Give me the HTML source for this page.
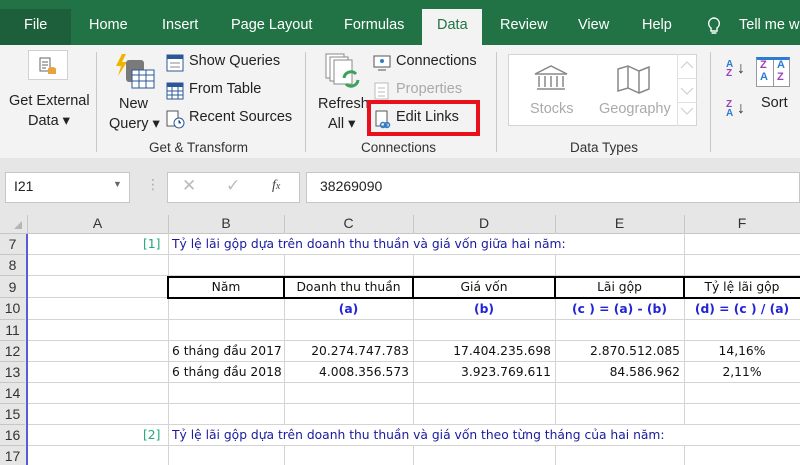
<!DOCTYPE html>
<html><head><meta charset="utf-8"><style>
*{margin:0;padding:0;box-sizing:border-box}
body{width:800px;height:465px;overflow:hidden;background:#fff;font-family:"Segoe UI","Liberation Sans","DejaVu Sans",sans-serif;position:relative}
.a{position:absolute;white-space:nowrap}
.tab{position:absolute;top:17px;color:#fff;font-size:14.5px}
.rb{font-size:14.5px;color:#222}
.grp{position:absolute;top:140px;font-size:13.5px;color:#333}
.sep{position:absolute;top:52px;width:1px;height:100px;background:#c8c8c8}
.cell{position:absolute;font-family:"DejaVu Sans","Liberation Sans",sans-serif;font-size:12.3px;color:#111;white-space:nowrap}
.rn{position:absolute;left:0;width:25px;text-align:center;font-size:14px;color:#333;font-family:"Liberation Sans",sans-serif}
.hl{position:absolute;left:28px;width:772px;height:1px;background:#d4d4d4}
.hr{position:absolute;left:0;width:25px;height:1px;background:#c6c6c6}
.vl{position:absolute;top:233px;width:1px;height:232px;background:#d4d4d4}
</style></head><body>
<div class="a" style="left:0;top:0;width:800px;height:45px;background:#217346"></div>
<div class="a" style="left:0;top:9px;width:71px;height:36px;background:#1d5f3a"></div>
<div class="tab" style="left:24px">File</div>
<div class="tab" style="left:89px">Home</div>
<div class="tab" style="left:162px">Insert</div>
<div class="tab" style="left:231px">Page Layout</div>
<div class="tab" style="left:344px">Formulas</div>
<div class="a" style="left:422px;top:9px;width:60px;height:37px;background:#f3f3f3"></div>
<div class="tab" style="left:437px;color:#217346">Data</div>
<div class="tab" style="left:500px">Review</div>
<div class="tab" style="left:578px">View</div>
<div class="tab" style="left:642px">Help</div>
<svg class="a" style="left:706px;top:16px" width="16" height="20"><path d="M8 2a5.5 5.5 0 0 0-3 10v3h6v-3a5.5 5.5 0 0 0-3-10zM5.5 17h5" stroke="#fff" stroke-width="1.4" fill="none"/></svg>
<div class="tab" style="left:739px">Tell me w</div>
<div class="a" style="left:0;top:45px;width:800px;height:113px;background:#f3f3f3"></div>
<div class="a" style="left:28px;top:50px;width:40px;height:30px;background:#fff;border:1px solid #d0d0d0"></div>
<svg class="a" style="left:38px;top:57px" width="20" height="20"><rect x="2" y="1" width="10" height="13" fill="#fff" stroke="#666"/><path d="M4 5h6M4 8h6M4 11h4" stroke="#666"/><ellipse cx="14" cy="12" rx="4" ry="2" fill="#e8a33d"/><rect x="10" y="12" width="8" height="5" fill="#e8a33d"/></svg>
<div class="a rb" style="left:9px;top:93px">Get External</div>
<div class="a rb" style="left:28px;top:113px">Data ▾</div>
<div class="sep" style="left:96px"></div>
<svg class="a" style="left:112px;top:52px" width="44" height="40"><path d="M10 2l-6 12h5l-3 10 9-14h-5l4-8z" fill="#f0b400"/><rect x="14" y="8" width="18" height="22" rx="3" fill="#7a7a7a"/><rect x="20" y="18" width="22" height="18" fill="#fff" stroke="#2b5797"/><path d="M20 23h22M20 29h22M27 18v18M34 18v18" stroke="#2b5797"/></svg>
<div class="a rb" style="left:119px;top:96px">New</div>
<div class="a rb" style="left:109px;top:116px">Query ▾</div>
<svg class="a" style="left:166px;top:54px" width="18" height="18"><rect x="1" y="1" width="16" height="16" fill="#fff" stroke="#2b5797"/><rect x="1" y="1" width="16" height="4" fill="#2b5797"/><path d="M4 9h10M4 13h10" stroke="#888"/></svg>
<div class="a rb" style="left:189px;top:53px">Show Queries</div>
<svg class="a" style="left:166px;top:82px" width="18" height="18"><rect x="1" y="1" width="16" height="16" fill="#fff" stroke="#2b5797"/><rect x="1" y="1" width="16" height="4" fill="#2b5797"/><path d="M1 9h16M1 13h16M6 5v12M12 5v12" stroke="#2b5797"/></svg>
<div class="a rb" style="left:189px;top:81px">From Table</div>
<svg class="a" style="left:166px;top:110px" width="20" height="20"><rect x="1" y="1" width="11" height="15" fill="#fff" stroke="#555"/><circle cx="13" cy="13" r="5" fill="#fff" stroke="#2b5797"/><path d="M13 10v3h2" stroke="#2b5797"/></svg>
<div class="a rb" style="left:189px;top:109px">Recent Sources</div>
<div class="grp" style="left:149px">Get &amp; Transform</div>
<div class="sep" style="left:305px"></div>
<svg class="a" style="left:324px;top:52px" width="40" height="40"><rect x="2" y="2" width="18" height="24" fill="#fff" stroke="#888"/><rect x="6" y="5" width="18" height="24" fill="#fff" stroke="#888"/><rect x="10" y="8" width="18" height="24" fill="#fff" stroke="#888"/><path d="M20 26a7 7 0 0 1 12-4M34 28a7 7 0 0 1-12 4" stroke="#3aa35a" stroke-width="3" fill="none"/></svg>
<div class="a rb" style="left:318px;top:96px">Refresh</div>
<div class="a rb" style="left:328px;top:116px">All ▾</div>
<svg class="a" style="left:373px;top:54px" width="18" height="18"><rect x="1" y="2" width="16" height="11" fill="#fff" stroke="#555"/><circle cx="9" cy="7" r="2" fill="#2b7cd3"/><path d="M5 16h8" stroke="#555"/></svg>
<div class="a rb" style="left:396px;top:53px">Connections</div>
<svg class="a" style="left:373px;top:82px" width="18" height="18"><rect x="2" y="1" width="13" height="16" fill="#fff" stroke="#bbb"/><path d="M5 6h7M5 10h7M5 14h7" stroke="#bbb"/></svg>
<div class="a rb" style="left:396px;top:81px;color:#aaa">Properties</div>
<svg class="a" style="left:375px;top:110px" width="18" height="20"><rect x="1" y="1" width="11" height="15" fill="#fff" stroke="#555"/><circle cx="8" cy="15" r="2.5" fill="none" stroke="#2b7cd3" stroke-width="1.5"/><circle cx="12" cy="15" r="2.5" fill="none" stroke="#2b7cd3" stroke-width="1.5"/></svg>
<div class="a rb" style="left:396px;top:109px">Edit Links</div>
<div class="a" style="left:367px;top:100px;width:113px;height:36px;border:4px solid #e8101a"></div>
<div class="grp" style="left:361px">Connections</div>
<div class="sep" style="left:496px"></div>
<div class="a" style="left:508px;top:54px;width:189px;height:72px;background:#fff;border:1px solid #d4d4d4"></div>
<div class="a" style="left:677px;top:54px;width:1px;height:72px;background:#e0e0e0"></div>
<div class="a" style="left:677px;top:78px;width:20px;height:1px;background:#e0e0e0"></div>
<div class="a" style="left:677px;top:102px;width:20px;height:1px;background:#e0e0e0"></div>
<svg class="a" style="left:679px;top:58px" width="16" height="64"><path d="M2 10l6-6 6 6M2 30l6 6 6-6M2 50l6 6 6-6" stroke="#ccc" fill="none"/></svg>
<svg class="a" style="left:533px;top:64px" width="36" height="28"><path d="M2 10L18 2 34 10ZM4 25h28M6 12v11M12 12v11M18 12v11M24 12v11M30 12v11" stroke="#888" stroke-width="1.5" fill="none"/></svg>
<div class="a rb" style="left:530px;top:101px;color:#aaa">Stocks</div>
<svg class="a" style="left:616px;top:64px" width="36" height="30"><path d="M2 5l10-3 11 5 10-4v22l-10 4-11-5-10 3z M12 2v22M23 7v22" stroke="#888" stroke-width="1.5" fill="none"/></svg>
<div class="a rb" style="left:599px;top:101px;color:#aaa">Geography</div>
<div class="grp" style="left:570px">Data Types</div>
<div class="sep" style="left:710px"></div>
<div class="a" style="left:726px;top:60px;font-size:10px;line-height:9px;font-weight:bold"><span style="color:#2b7cd3">A</span><br><span style="color:#9b3fb5">Z</span></div>
<div class="a" style="left:737px;top:60px;font-size:16px;color:#333">↓</div>
<div class="a" style="left:726px;top:100px;font-size:10px;line-height:9px;font-weight:bold"><span style="color:#9b3fb5">Z</span><br><span style="color:#2b7cd3">A</span></div>
<div class="a" style="left:737px;top:100px;font-size:16px;color:#333">↓</div>
<div class="a" style="left:756px;top:57px;width:34px;height:30px;background:#fff;border:1px solid #999;border-top:3px solid #2b7cd3"></div>
<div class="a" style="left:773px;top:60px;width:1px;height:27px;background:#999"></div>
<div class="a" style="left:760px;top:59px;font-size:11px;line-height:12px;font-weight:bold"><span style="color:#9b3fb5">Z</span><br><span style="color:#2b7cd3">A</span></div>
<div class="a" style="left:777px;top:59px;font-size:11px;line-height:12px;font-weight:bold"><span style="color:#2b7cd3">A</span><br><span style="color:#9b3fb5">Z</span></div>
<div class="a rb" style="left:761px;top:95px">Sort</div>
<div class="a" style="left:0;top:158px;width:800px;height:55px;background:#e6e6e6"></div>
<div class="a" style="left:5px;top:172px;width:125px;height:31px;background:#fff;border:1px solid #c6c6c6"></div>
<div class="a" style="left:14px;top:178px;font-size:14px;color:#222">I21</div>
<div class="a" style="left:113px;top:179px;font-size:9px;color:#666">▼</div>
<div class="a" style="left:146px;top:176px;font-size:14px;color:#aaa">⋮</div>
<div class="a" style="left:167px;top:172px;width:133px;height:31px;background:#fff;border:1px solid #c6c6c6"></div>
<div class="a" style="left:182px;top:176px;font-size:17px;color:#bbb">✕</div>
<div class="a" style="left:226px;top:176px;font-size:17px;color:#bbb">✓</div>
<div class="a" style="left:272px;top:178px;font-size:14px;color:#444;font-style:italic;font-family:'Liberation Serif',serif">f<span style="font-size:10px">x</span></div>
<div class="a" style="left:306px;top:172px;width:494px;height:31px;background:#fff;border:1px solid #c6c6c6"></div>
<div class="a" style="left:320px;top:178px;font-size:14px;color:#222">38269090</div>
<div class="a" style="left:0;top:213px;width:800px;height:21px;background:#e6e6e6;border-bottom:1px solid #c6c6c6"></div>
<svg class="a" style="left:13px;top:220px" width="10" height="10"><path d="M9 1v8H1z" fill="#b5b5b5"/></svg>
<div class="a" style="left:27px;top:215px;width:1px;height:19px;background:#c6c6c6"></div>
<div class="a" style="left:168px;top:215px;width:1px;height:19px;background:#c6c6c6"></div>
<div class="a" style="left:284px;top:215px;width:1px;height:19px;background:#c6c6c6"></div>
<div class="a" style="left:413px;top:215px;width:1px;height:19px;background:#c6c6c6"></div>
<div class="a" style="left:555px;top:215px;width:1px;height:19px;background:#c6c6c6"></div>
<div class="a" style="left:684px;top:215px;width:1px;height:19px;background:#c6c6c6"></div>
<div class="a" style="left:27px;top:215px;width:141px;text-align:center;color:#333;font-size:14px">A</div>
<div class="a" style="left:168px;top:215px;width:116px;text-align:center;color:#333;font-size:14px">B</div>
<div class="a" style="left:284px;top:215px;width:129px;text-align:center;color:#333;font-size:14px">C</div>
<div class="a" style="left:413px;top:215px;width:142px;text-align:center;color:#333;font-size:14px">D</div>
<div class="a" style="left:555px;top:215px;width:129px;text-align:center;color:#333;font-size:14px">E</div>
<div class="a" style="left:684px;top:215px;width:116px;text-align:center;color:#333;font-size:14px">F</div>
<div class="a" style="left:0;top:234px;width:26px;height:231px;background:#e6e6e6"></div>
<div class="a" style="left:26px;top:234px;width:2px;height:231px;background:#5b5bd6"></div>
<div class="hr" style="top:254px"></div><div class="hr" style="top:275px"></div><div class="hr" style="top:297px"></div><div class="hr" style="top:319px"></div><div class="hr" style="top:340px"></div><div class="hr" style="top:361px"></div><div class="hr" style="top:382px"></div><div class="hr" style="top:403px"></div><div class="hr" style="top:424px"></div><div class="hr" style="top:445px"></div>
<div class="rn" style="top:236px">7</div><div class="rn" style="top:257px">8</div><div class="rn" style="top:279px">9</div><div class="rn" style="top:300px">10</div><div class="rn" style="top:322px">11</div><div class="rn" style="top:343px">12</div><div class="rn" style="top:364px">13</div><div class="rn" style="top:385px">14</div><div class="rn" style="top:406px">15</div><div class="rn" style="top:427px">16</div><div class="rn" style="top:448px">17</div>
<div class="hl" style="top:254px"></div><div class="hl" style="top:275px"></div><div class="hl" style="top:297px"></div><div class="hl" style="top:319px"></div><div class="hl" style="top:340px"></div><div class="hl" style="top:361px"></div><div class="hl" style="top:382px"></div><div class="hl" style="top:403px"></div><div class="hl" style="top:424px"></div><div class="hl" style="top:445px"></div>
<div class="vl" style="left:168px"></div><div class="vl" style="left:284px"></div><div class="vl" style="left:413px"></div><div class="vl" style="left:555px"></div><div class="vl" style="left:684px"></div>
<div class="a" style="left:169px;top:234px;width:515px;height:20px;background:#fff"></div>
<div class="a" style="left:169px;top:425px;width:631px;height:20px;background:#fff"></div>
<div class="a" style="left:167px;top:276px;width:633px;height:23px;border:2px solid #000;border-right:none"></div>
<div class="a" style="left:283px;top:276px;width:2px;height:23px;background:#000"></div>
<div class="a" style="left:412px;top:276px;width:2px;height:23px;background:#000"></div>
<div class="a" style="left:554px;top:276px;width:2px;height:23px;background:#000"></div>
<div class="a" style="left:683px;top:276px;width:2px;height:23px;background:#000"></div>
<div class="cell" style="left:143px;top:237px;color:#1fa87a">[1]</div>
<div class="cell" style="left:172px;top:237px;color:#1a1a9e">Tỷ lệ lãi gộp dựa trên doanh thu thuần và giá vốn giữa hai năm:</div>
<div class="cell" style="left:168px;top:280px;width:116px;text-align:center">Năm</div>
<div class="cell" style="left:284px;top:280px;width:129px;text-align:center">Doanh thu thuần</div>
<div class="cell" style="left:413px;top:280px;width:142px;text-align:center">Giá vốn</div>
<div class="cell" style="left:555px;top:280px;width:129px;text-align:center">Lãi gộp</div>
<div class="cell" style="left:684px;top:280px;width:116px;text-align:center">Tỷ lệ lãi gộp</div>
<div class="cell" style="left:284px;top:302px;width:129px;text-align:center;color:#2323d8;font-weight:bold">(a)</div>
<div class="cell" style="left:413px;top:302px;width:142px;text-align:center;color:#2323d8;font-weight:bold">(b)</div>
<div class="cell" style="left:555px;top:302px;width:129px;text-align:center;color:#2323d8;font-weight:bold">(c ) = (a) - (b)</div>
<div class="cell" style="left:684px;top:302px;width:116px;text-align:center;color:#2323d8;font-weight:bold">(d) = (c ) / (a)</div>
<div class="cell" style="left:172px;top:344px">6 tháng đầu 2017</div>
<div class="cell" style="left:284px;top:344px;width:125px;text-align:right">20.274.747.783</div>
<div class="cell" style="left:413px;top:344px;width:138px;text-align:right">17.404.235.698</div>
<div class="cell" style="left:555px;top:344px;width:125px;text-align:right">2.870.512.085</div>
<div class="cell" style="left:684px;top:344px;width:116px;text-align:center">14,16%</div>
<div class="cell" style="left:172px;top:365px">6 tháng đầu 2018</div>
<div class="cell" style="left:284px;top:365px;width:125px;text-align:right">4.008.356.573</div>
<div class="cell" style="left:413px;top:365px;width:138px;text-align:right">3.923.769.611</div>
<div class="cell" style="left:555px;top:365px;width:125px;text-align:right">84.586.962</div>
<div class="cell" style="left:684px;top:365px;width:116px;text-align:center">2,11%</div>
<div class="cell" style="left:143px;top:428px;color:#1fa87a">[2]</div>
<div class="cell" style="left:172px;top:428px;color:#1a1a9e">Tỷ lệ lãi gộp dựa trên doanh thu thuần và giá vốn theo từng tháng của hai năm:</div>
</body></html>
